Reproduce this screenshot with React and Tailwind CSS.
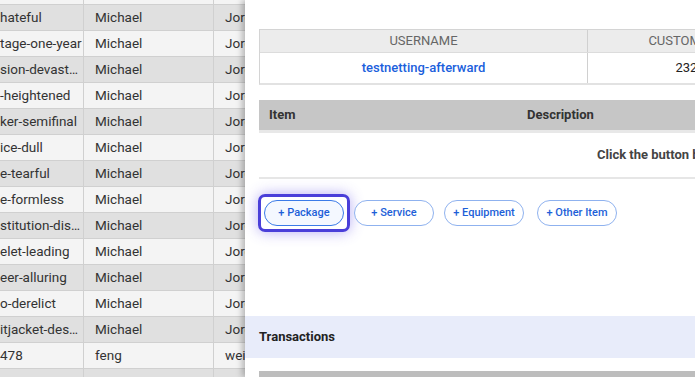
import React from "react";

const rows = [
  ["hateful", "Michael", "Jordan"],
  ["tage-one-year", "Michael", "Jordan"],
  ["sion-devastating", "Michael", "Jordan"],
  ["-heightened", "Michael", "Jordan"],
  ["ker-semifinal", "Michael", "Jordan"],
  ["ice-dull", "Michael", "Jordan"],
  ["e-tearful", "Michael", "Jordan"],
  ["e-formless", "Michael", "Jordan"],
  ["stitution-disaster", "Michael", "Jordan"],
  ["elet-leading", "Michael", "Jordan"],
  ["eer-alluring", "Michael", "Jordan"],
  ["o-derelict", "Michael", "Jordan"],
  ["itjacket-destiny", "Michael", "Jordan"],
  ["478", "feng", "wei"],
  ["", "", ""],
];

function Btn({ label, focused }) {
  return (
    <button
      className={
        "relative w-[80px] h-[26px] rounded-full border text-[11px] font-medium text-[#1d5fd8] flex items-center justify-center " +
        (focused ? "border-[#3b7be8] bg-[#f4f8ff]" : "border-[#8fb2ef] bg-white")
      }
    >
      {focused && (
        <span className="absolute -inset-[7px] rounded-[7px] border-[3px] border-[#4a3fd9] shadow-[0_0_14px_rgba(90,70,230,0.45)] pointer-events-none" />
      )}
      {label}
    </button>
  );
}

export default function App() {
  return (
    <div
      className="relative w-[695px] h-[377px] overflow-hidden bg-white"
      style={{ fontFamily: "Roboto, 'Liberation Sans', sans-serif" }}
    >
      {/* background table */}
      <div className="flex flex-col -mt-[21px] text-[13.5px] text-[#333]">
        <div className="flex h-[26px] bg-[#f4f4f4] border-b border-[#d0d0d0]">
          <div className="w-[84px] border-r border-[#d0d0d0]" />
          <div className="w-[130px] border-r border-[#d0d0d0]" />
          <div className="flex-1" />
        </div>
        {rows.map((r, i) => (
          <div
            key={i}
            className={
              "flex h-[26px] items-center border-b border-[#d0d0d0] " +
              (i % 2 === 0 ? "bg-[#e0e0e0]" : "bg-[#f4f4f4]")
            }
          >
            <div className="w-[84px] h-full flex items-center border-r border-[#d0d0d0] pr-[1px] overflow-hidden">
              <span className="truncate whitespace-nowrap">{r[0]}</span>
            </div>
            <div className="w-[130px] h-full flex items-center border-r border-[#d0d0d0] pl-[11px]">
              {r[1]}
            </div>
            <div className="flex-1 h-full flex items-center pl-[11px]">{r[2]}</div>
          </div>
        ))}
      </div>

      {/* drawer panel */}
      <div className="absolute top-0 bottom-0 left-[245px] right-0 bg-white shadow-[-3px_0_6px_rgba(0,0,0,0.25)] overflow-hidden">
        <div className="pt-[29px] pl-[14px]">
          {/* customer table */}
          <div className="w-[700px] border border-[#d4d4d4] border-b-2 border-b-[#e2e2e2]">
            <div className="flex h-[23px] bg-[#ececec] text-[13px] text-[#666] border-b border-[#dcdcdc]">
              <div className="w-[328px] flex items-center justify-center border-r border-[#d0d0d0]">USERNAME</div>
              <div className="w-[204px] flex items-center justify-center">CUSTOMER ID</div>
            </div>
            <div className="flex h-[30px] text-[13px]">
              <div className="w-[328px] flex items-center justify-center border-r border-[#d0d0d0] text-[#1b60dc] font-medium">
                testnetting-afterward
              </div>
              <div className="w-[204px] flex items-center justify-center text-[#222]">2324</div>
            </div>
          </div>

          {/* items table */}
          <div className="mt-[15px] w-[900px]">
            <div className="flex h-[30px] items-center bg-[#c6c6c6] text-[13px] font-bold text-[#333]">
              <div className="w-[268px] pl-[10px]">Item</div>
              <div>Description</div>
            </div>
            <div className="h-[3px] bg-[#e8e8e8]" />
            <div className="h-[46px] flex items-center pl-[338px] text-[13px] font-bold text-[#444] border-b-2 border-[#e6e6e6]">
              Click the button below to add items.
            </div>
          </div>

          {/* add buttons */}
          <div className="mt-[21px] flex gap-[10px] pl-[5px]">
            <Btn label="+ Package" focused />
            <Btn label="+ Service" />
            <Btn label="+ Equipment" />
            <div className="ml-[3px]">
              <Btn label="+ Other Item" />
            </div>
          </div>
        </div>

        {/* transactions */}
        <div className="mt-[90px] h-[42px] bg-[#e8ecfa] flex items-center pl-[14px] text-[13px] font-bold text-[#222]">
          Transactions
        </div>
        <div className="mt-[13px] ml-[14px] h-[12px] bg-[#bdbdbd]" />
      </div>
    </div>
  );
}
